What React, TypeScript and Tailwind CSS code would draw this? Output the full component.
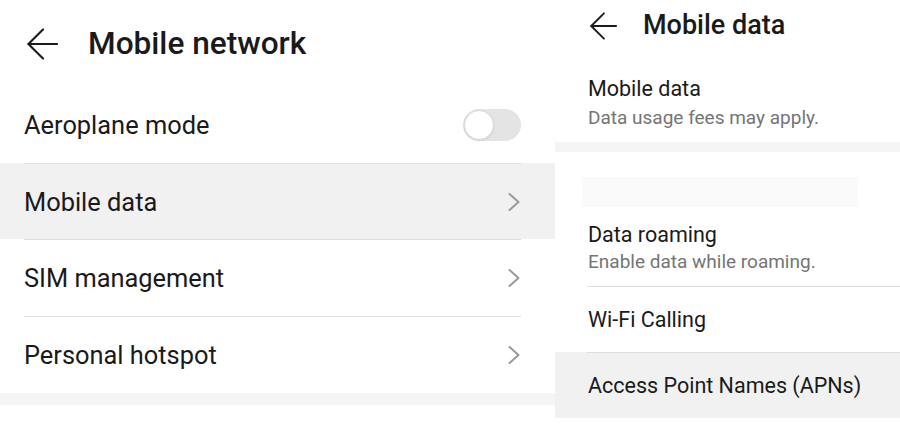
import { ReactNode } from "react"

const font = { fontFamily: "Roboto, 'Noto Sans', 'Liberation Sans', sans-serif" }

function BackArrow({ size }: { size: number }) {
  return (
    <svg width={size} height={size + 1} viewBox="0 0 32 33" fill="none" stroke="#1c1c1c" strokeWidth="2.2" strokeLinecap="round" strokeLinejoin="round">
      <path d="M1.5 16.5H31" />
      <path d="M16.5 1.5L1.5 16.5L16.5 31.5" />
    </svg>
  )
}

function Chevron() {
  return (
    <svg width="14" height="20" viewBox="0 0 14 20" fill="none" stroke="#9a9a9a" strokeWidth="2" strokeLinecap="round" strokeLinejoin="round">
      <path d="M2.5 2L11.5 10L2.5 18" />
    </svg>
  )
}

function Divider({ className }: { className: string }) {
  return <div className={"h-px bg-[#dedede] " + className} />
}

function LeftRow({ label, right, active, h }: { label: string; right: ReactNode; active?: boolean; h: string }) {
  return (
    <div className={`${h} flex items-center justify-between pl-[24px] pr-[34px] ${active ? "bg-[#f1f1f1]" : ""}`}>
      <span className="pt-[2px] text-[25.4px] leading-none text-[#1a1a1a]">{label}</span>
      {right}
    </div>
  )
}

function Toggle() {
  return (
    <div className="w-[58px] h-[32px] rounded-full bg-[#e4e4e4] p-[1px] flex items-center">
      <div className="w-[30px] h-[30px] rounded-full bg-white border border-[#d8d8d8] shadow-[0_1px_2px_rgba(0,0,0,0.08)]" />
    </div>
  )
}

export default function App() {
  return (
    <div className="w-[900px] h-[431px] flex bg-white overflow-hidden" style={font}>
      {/* left screen */}
      <div className="w-[555px] flex flex-col">
        <div className="h-[87px] flex items-center pl-[27px]">
          <BackArrow size={31} />
          <h1 className="ml-[30px] text-[31.6px] font-medium text-[#1a1a1a] leading-none">Mobile network</h1>
        </div>
        <LeftRow h="h-[76px]" label="Aeroplane mode" right={<Toggle />} />
        <div className="bg-[#f1f1f1]">
          <Divider className="ml-[24px] mr-[34px]" />
        </div>
        <LeftRow h="h-[75px]" active label="Mobile data" right={<Chevron />} />
        <Divider className="ml-[24px] mr-[34px]" />
        <LeftRow h="h-[76px]" label="SIM management" right={<Chevron />} />
        <Divider className="ml-[24px] mr-[34px]" />
        <LeftRow h="h-[76px]" label="Personal hotspot" right={<Chevron />} />
        <div className="h-[12px] bg-[#f5f5f5]" />
      </div>

      {/* right screen */}
      <div className="flex-1 flex flex-col">
        <div className="h-[51px] flex items-center pl-[35px]">
          <BackArrow size={27} />
          <h1 className="ml-[26px] text-[27px] font-medium text-[#1a1a1a] leading-none">Mobile data</h1>
        </div>
        <div className="pl-[33px] pt-[24px] pb-[12px]">
          <div className="text-[21.5px] leading-[28px] text-[#1a1a1a]">Mobile data</div>
          <div className="mt-[3px] text-[19px] leading-[24px] text-[#757575]">Data usage fees may apply.</div>
        </div>
        <div className="h-[10px] bg-[#f5f5f5]" />
        <div className="pl-[27px] pt-[25px]">
          <div className="w-[276px] h-[30px] bg-[#fafafa]" />
        </div>
        <div className="pl-[33px] pt-[14px] pb-[12px]">
          <div className="text-[21.5px] leading-[28px] text-[#1a1a1a]">Data roaming</div>
          <div className="mt-[1px] text-[19px] leading-[24px] text-[#757575]">Enable data while roaming.</div>
        </div>
        <Divider className="ml-[32px]" />
        <div className="h-[65px] flex items-center pl-[33px]">
          <span className="text-[21.5px] leading-none text-[#1a1a1a]">Wi-Fi Calling</span>
        </div>
        <div className="bg-[#f1f1f1]">
          <Divider className="ml-[32px]" />
          <div className="h-[65px] flex items-center pl-[33px]">
            <span className="text-[21.5px] leading-none text-[#1a1a1a]">Access Point Names (APNs)</span>
          </div>
        </div>
      </div>
    </div>
  )
}
